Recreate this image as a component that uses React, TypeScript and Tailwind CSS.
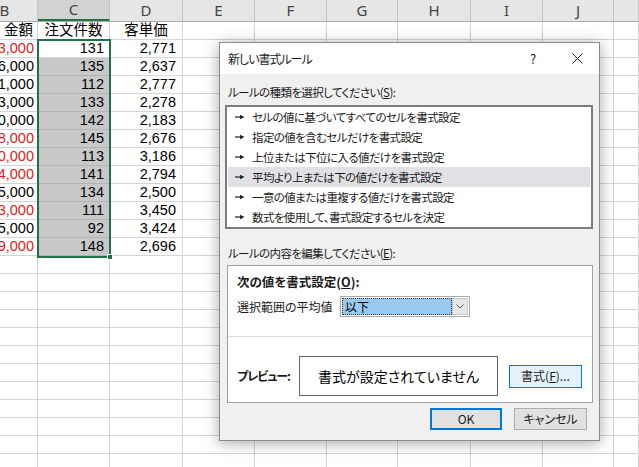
const colW = [
  'w-[66px]',
  'w-[72px]',
  'w-[73px]',
  'w-[72px]',
  'w-[72px]',
  'w-[71px]',
  'w-[73px]',
  'w-[72px]',
  'w-[71px]',
  'w-[25px]',
];
const letters = ['B', 'C', 'D', 'E', 'F', 'G', 'H', 'I', 'J', ''];

const data: [string, boolean, string, string][] = [
  ['3,000', true, '131', '2,771'],
  ['6,000', false, '135', '2,637'],
  ['1,000', false, '112', '2,777'],
  ['3,000', false, '133', '2,278'],
  ['0,000', false, '142', '2,183'],
  ['8,000', true, '145', '2,676'],
  ['0,000', true, '113', '3,186'],
  ['4,000', true, '141', '2,794'],
  ['5,000', false, '134', '2,500'],
  ['3,000', true, '111', '3,450'],
  ['5,000', false, '92', '3,424'],
  ['9,000', true, '148', '2,696'],
];

const rules = [
  'セルの値に基づいてすべてのセルを書式設定',
  '指定の値を含むセルだけを書式設定',
  '上位または下位に入る値だけを書式設定',
  '平均より上または下の値だけを書式設定',
  '一意の値または重複する値だけを書式設定',
  '数式を使用して、書式設定するセルを決定',
];

function Arrow() {
  return (
    <svg width="10" height="6" viewBox="0 0 10 6" className="shrink-0">
      <line x1="0" y1="3" x2="6" y2="3" stroke="#222" strokeWidth="1.2" />
      <polygon points="5,0.8 9.5,3 5,5.2" fill="#222" />
    </svg>
  );
}

function Sheet() {
  const empty = Array.from({ length: 12 });
  return (
    <div className="-ml-[28px] flex flex-col font-['Liberation_Sans','Noto_Sans_CJK_JP',sans-serif] text-[14.5px] text-black">
      <div className="flex h-[22px] border-b border-[#ababab] bg-[#e6e6e6]">
        {letters.map((l, i) => (
          <div
            key={i}
            className={`${colW[i]} flex items-center justify-center border-r border-[#c4c4c4] text-[15px] text-[#444] font-['Noto_Sans',sans-serif] ${
              i === 1 ? 'bg-[#d2d2d2] border-b-2 border-b-[#217346]' : ''
            }`}
          >
            {l}
          </div>
        ))}
      </div>
      <div className="flex h-[18px] leading-[17px]">
        <div className={`${colW[0]} border-r border-b border-[#d4d4d4] pr-[4px] text-right`}>金額</div>
        <div className={`${colW[1]} border-r border-b border-[#d4d4d4] text-center`}>注文件数</div>
        <div className={`${colW[2]} border-r border-b border-[#d4d4d4] text-center`}>客単価</div>
        {colW.slice(3).map((w, i) => (
          <div key={i} className={`${w} border-r border-b border-[#d4d4d4]`} />
        ))}
      </div>
      {data.map(([b, red, c, d], r) => (
        <div key={r} className="flex h-[18px] leading-[17px]">
          <div className={`${colW[0]} border-r border-b border-[#d4d4d4] pr-[3px] text-right ${red ? 'text-[#dc1c1c]' : ''}`}>
            {b}
          </div>
          <div
            className={`${colW[1]} border-r border-b pr-[5px] text-right ${
              r === 0 ? 'border-[#d4d4d4] bg-white' : 'border-[#b4b4b4] bg-[#c8c8c8]'
            }`}
          >
            {c}
          </div>
          <div className={`${colW[2]} border-r border-b border-[#d4d4d4] pr-[6px] text-right`}>{d}</div>
          {colW.slice(3).map((w, i) => (
            <div key={i} className={`${w} border-r border-b border-[#d4d4d4]`} />
          ))}
        </div>
      ))}
      {empty.map((_, r) => (
        <div key={r} className="flex h-[18px]">
          {colW.map((w, i) => (
            <div key={i} className={`${w} border-r border-b border-[#d4d4d4]`} />
          ))}
        </div>
      ))}
    </div>
  );
}

function Dialog() {
  return (
    <div className="absolute left-[219px] top-[42px] flex h-[399px] w-[381px] flex-col border border-[#8a8a8a] bg-[#f0f0f0] font-['Noto_Sans_CJK_JP',sans-serif] text-[12px] leading-[16px] text-[#1a1a1a] shadow-[0_2px_14px_rgba(0,0,0,0.35)] [font-feature-settings:'palt']">
      <div className="flex h-[31px] items-center bg-white pl-[8px]">
        <div className="flex-1 tracking-[-1px]">新しい書式ルール</div>
        <div className="flex w-[44px] justify-center text-[13px]">?</div>
        <div className="flex w-[44px] justify-center">
          <svg width="11" height="11" viewBox="0 0 11 11">
            <path d="M0.5 0.5 L10.5 10.5 M10.5 0.5 L0.5 10.5" stroke="#222" strokeWidth="1" />
          </svg>
        </div>
      </div>

      <div className="mt-[10px] pl-[8px] text-[11.5px] tracking-[-0.6px]">
        ルールの種類を選択してください(<span className="underline">S</span>):
      </div>
      <div className="ml-[5px] mt-[5px] h-[124px] w-[368px] border-2 border-[#7d7d7d] bg-white px-[1px]">
        {rules.map((t, i) => (
          <div
            key={i}
            className={`flex h-[20px] items-center gap-[7px] pl-[7px] ${i === 3 ? 'bg-[#e1e1e5]' : ''}`}
          >
            <Arrow />
            <span className="text-[11.5px] tracking-[-0.6px]">{t}</span>
          </div>
        ))}
      </div>

      <div className="mt-[16px] pl-[8px] text-[11.5px] tracking-[-0.6px]">
        ルールの内容を編集してください(<span className="underline">E</span>):
      </div>
      <div className="ml-[7px] mt-[4px] flex h-[138px] w-[366px] flex-col border border-[#a0a0a0] bg-white">
        <div className="pl-[9px] pt-[8px] text-[12.5px] font-bold">
          次の値を書式設定(<span className="underline">O</span>):
        </div>
        <div className="mt-[6px] flex h-[21px] items-center pl-[9px]">
          <div className="w-[103px]">選択範囲の平均値</div>
          <div className="flex h-[21px] w-[130px] border border-[#a9a9a9] bg-white p-[1px]">
            <div className="flex-1 border border-dotted border-[#333] bg-[#99c9ef] pl-[2px] leading-[15px] text-black">
              以下
            </div>
            <div className="flex w-[16px] items-center justify-center border border-[#c8c8c8] bg-[#e6e6e6]">
              <svg width="8" height="5" viewBox="0 0 8 5">
                <polyline points="0.5,0.5 4,4 7.5,0.5" fill="none" stroke="#555" strokeWidth="1" />
              </svg>
            </div>
          </div>
        </div>
        <div className="mt-[19px] h-px bg-[#dcdcdc]" />
        <div className="mt-[19px] flex items-center pl-[9px]">
          <div className="w-[62px] font-bold tracking-[-1px]">プレビュー:</div>
          <div className="flex h-[40px] w-[199px] items-center justify-center border border-[#646464] bg-white text-[14px] text-black">
            書式が設定されていません
          </div>
          <div className="ml-[11px] flex h-[23px] w-[73px] items-center justify-center border border-[#0078d7] bg-[#e5f1fb]">
            書式(<span className="underline">F</span>)...
          </div>
        </div>
      </div>

      <div className="mt-[5px] flex justify-end gap-[12px] pr-[12px]">
        <div className="flex h-[22px] w-[72px] items-center justify-center border-2 border-[#0078d7] bg-[#e1e1e1]">
          OK
        </div>
        <div className="flex h-[22px] w-[73px] items-center justify-center border border-[#adadad] bg-[#e1e1e1]">
          キャンセル
        </div>
      </div>
    </div>
  );
}

export default function App() {
  return (
    <div className="relative h-[467px] w-[639px] overflow-hidden bg-white">
      <Sheet />
      <div className="absolute left-[37px] top-[39px] h-[219px] w-[74px] border-2 border-[#217346]" />
      <div className="absolute left-[107px] top-[254px] h-[6px] w-[6px] border border-white bg-[#217346]" />
      <Dialog />
    </div>
  );
}
